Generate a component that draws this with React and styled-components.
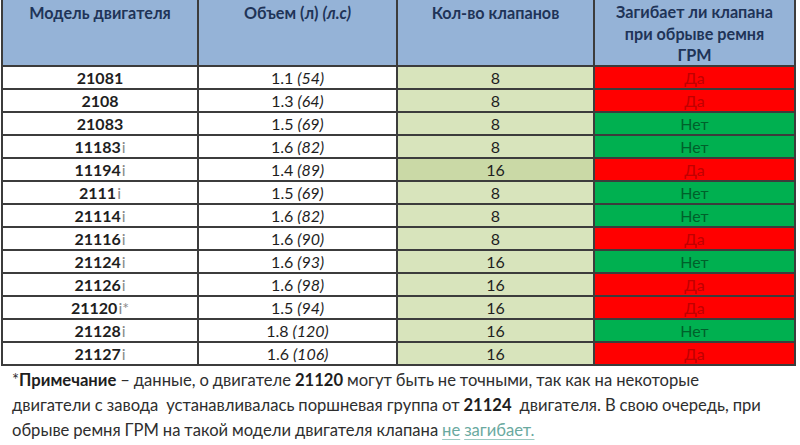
import React from 'react';
import styled, { createGlobalStyle } from 'styled-components';

const GlobalStyle = createGlobalStyle`
  html, body {
    margin: 0;
    padding: 0;
    background: #ffffff;
  }
  body {
    font-family: Lato, "Noto Sans", sans-serif;
    color: #222;
  }
`;

const Page = styled.div`
  width: 800px;
  height: 445px;
  overflow: hidden;
  background: #fff;
`;

const Table = styled.div`
  display: grid;
  grid-template-columns: 194px 197px 195px 199px;
  grid-template-rows: 65px;
  grid-auto-rows: 21px;
  gap: 2px;
  padding: 0 2px 2px 2px;
  margin-left: 1px;
  width: max-content;
  background: #3c3c3c;
`;

const HeadCell = styled.div`
  background: #95b3d7;
  color: #1f3458;
  font-weight: 700;
  font-size: 16.2px;
  line-height: 21.5px;
  text-align: center;
  padding-top: ${p => (p.$tall ? '1px' : '2px')};
`;

const Cell = styled.div`
  display: flex;
  align-items: center;
  justify-content: center;
  font-size: 16px;
  line-height: 21px;
  background: ${p => p.$bg || '#ffffff'};
  color: ${p => p.$color || '#1e1e1e'};
  font-weight: ${p => (p.$bold ? 700 : 400)};
`;

const Suffix = styled.span`
  color: #8a8a8a;
  font-weight: 400;
  margin-left: 1px;
`;

const Power = styled.span`
  font-style: italic;
  margin-left: 4px;
`;

const Note = styled.div`
  padding: 2px 0 0 12px;
  font-size: 16.6px;
  line-height: 25px;
  color: #2e2e2e;
  word-spacing: -0.3px;
  white-space: nowrap;
`;

const Strong = styled.b`
  font-weight: 700;
  color: #1e1e1e;
`;

const Link = styled.span`
  color: #6aa9a0;
  text-decoration: underline;
  text-decoration-color: #9cc9c2;
  text-underline-offset: 3px;
`;

const rows = [
  ['21081', '', '1.1', '54', '8', true],
  ['2108', '', '1.3', '64', '8', true],
  ['21083', '', '1.5', '69', '8', false],
  ['11183', 'i', '1.6', '82', '8', false],
  ['11194', 'i', '1.4', '89', '16', true],
  ['2111', 'i', '1.5', '69', '8', false],
  ['21114', 'i', '1.6', '82', '8', false],
  ['21116', 'i', '1.6', '90', '8', true],
  ['21124', 'i', '1.6', '93', '16', false],
  ['21126', 'i', '1.6', '98', '16', true],
  ['21120', 'i*', '1.5', '94', '16', true],
  ['21128', 'i', '1.8', '120', '16', false],
  ['21127', 'i', '1.6', '106', '16', true],
];

export default function App() {
  return (
    <Page>
      <GlobalStyle />
      <Table>
        <HeadCell>Модель двигателя</HeadCell>
        <HeadCell>
          Объем (л) <i>(л.с)</i>
        </HeadCell>
        <HeadCell>Кол-во клапанов</HeadCell>
        <HeadCell $tall>
          Загибает ли клапана
          <br />
          при обрыве ремня
          <br />
          ГРМ
        </HeadCell>
        {rows.map(([model, suf, vol, hp, valves, bends], i) => (
          <React.Fragment key={model}>
            <Cell $bold>
              {model}
              {suf && <Suffix>{suf}</Suffix>}
            </Cell>
            <Cell>
              {vol}
              <Power>({hp})</Power>
            </Cell>
            <Cell $bg={i === 4 ? '#cad9a6' : '#d8e4bc'}>{valves}</Cell>
            <Cell
              $bg={bends ? '#ff0000' : '#00b050'}
              $color={bends ? '#c00000' : '#00602b'}
            >
              {bends ? 'Да' : 'Нет'}
            </Cell>
          </React.Fragment>
        ))}
      </Table>
      <Note>
        *<Strong>Примечание</Strong> – данные, о двигателе <Strong>21120</Strong>{' '}
        могут быть не точными, так как на некоторые
        <br />
        двигатели с завода &nbsp;устанавливалась поршневая группа от{' '}
        <Strong>21124</Strong>&nbsp; двигателя. В свою очередь, при
        <br />
        обрыве ремня ГРМ на такой модели двигателя клапана <Link>не</Link>{' '}
        <Link>загибает.</Link>
      </Note>
    </Page>
  );
}
